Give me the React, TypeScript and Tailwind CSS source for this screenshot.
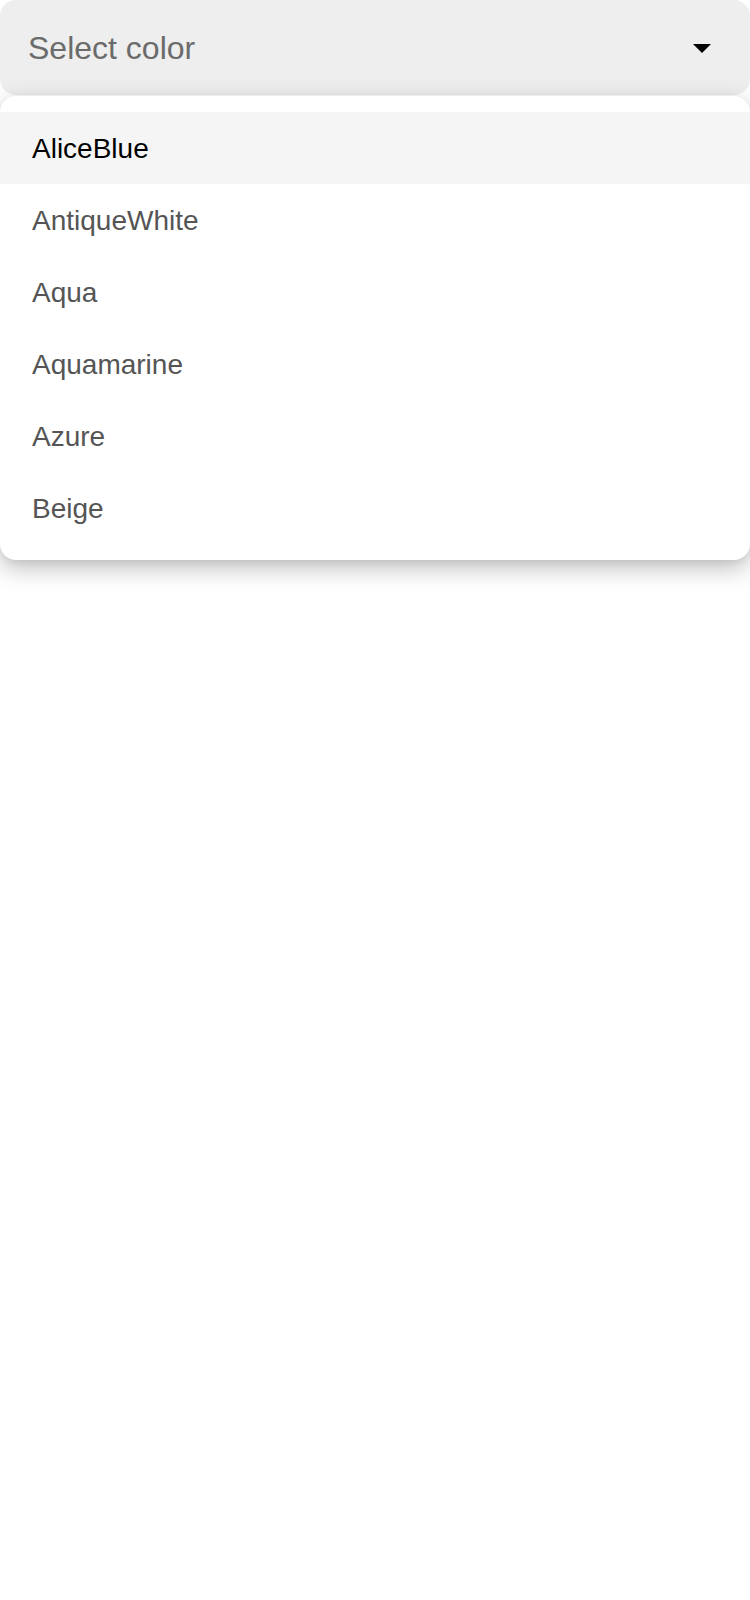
const colors = ["AliceBlue", "AntiqueWhite", "Aqua", "Aquamarine", "Azure", "Beige"];

export default function App() {
  return (
    <div className="relative w-[750px] bg-white font-['Liberation_Sans',Arial,sans-serif]">
      <button className="flex h-[95px] w-full items-center justify-between rounded-2xl bg-[#eeeeee] pl-[28px] pr-[39px] text-left">
        <span className="text-[32px] text-[#6b6b6b]">Select color</span>
        <svg width="18" height="9" viewBox="0 0 18 9" className="mt-[2px]">
          <path d="M0 0h18L9 9z" fill="#000" />
        </svg>
      </button>
      <div className="relative z-10 mt-[1px] rounded-2xl bg-white py-4 shadow-[0_8px_24px_rgba(0,0,0,0.26),0_2px_6px_rgba(0,0,0,0.06)]">
        {colors.map((c, i) => (
          <div
            key={c}
            className={
              i === 0
                ? "flex h-[72px] items-center bg-[#f5f5f5] pl-[32px] pt-[1px] text-[28px] text-black"
                : "flex h-[72px] items-center pl-[32px] pt-[1px] text-[28px] text-[#555555]"
            }
          >
            {c}
          </div>
        ))}
      </div>
      <div className="h-[1040px]" />
    </div>
  );
}
